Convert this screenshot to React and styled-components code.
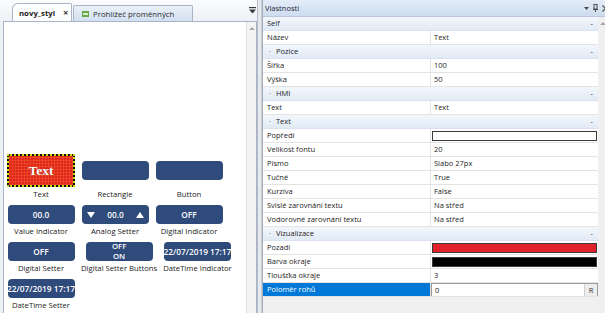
import React from "react";
import styled, { createGlobalStyle } from "styled-components";

const GlobalStyle = createGlobalStyle`
  html, body {
    margin: 0;
    padding: 0;
  }
  body {
    font-family: "Open Sans", "Noto Sans", sans-serif;
    background: #eceff3;
  }
`;

const Window = styled.div`
  width: 605px;
  height: 313px;
  display: flex;
  overflow: hidden;
  background: #eceff3;
  font-size: 7.5px;
  color: #1e1e1e;
`;

/* ---------- left pane ---------- */

const LeftPane = styled.div`
  width: 257px;
  flex-shrink: 0;
  display: flex;
  flex-direction: column;
`;

const TabStrip = styled.div`
  height: 21px;
  flex-shrink: 0;
  display: flex;
  align-items: flex-end;
  padding-left: 12px;
  background: linear-gradient(#fbfcfd, #eef1f5);
  font-size: 7.8px;
`;

const Tab = styled.div`
  box-sizing: border-box;
  width: ${(p) => p.$w}px;
  height: ${(p) => (p.$active ? 18 : 16)}px;
  display: flex;
  align-items: center;
  gap: 4px;
  padding-left: ${(p) => (p.$active ? 6 : 8)}px;
  margin-right: 1px;
  border: 1px solid #a9b5c7;
  border-bottom: none;
  border-radius: ${(p) => (p.$active ? "6px 2px 0 0" : "2px 2px 0 0")};
  background: ${(p) => (p.$active ? "#fff" : "linear-gradient(#e9f0f9, #d2e0f1)")};
  font-weight: ${(p) => (p.$active ? 700 : 400)};
  color: ${(p) => (p.$active ? "#1a1a1a" : "#2b2b2b")};
  white-space: nowrap;
`;

const Close = styled.span`
  margin-left: 4px;
  font-size: 9.5px;
  font-weight: 700;
  color: #333;
`;

const StripMenu = styled.div`
  margin-left: auto;
  margin-right: 1px;
  align-self: center;
  display: flex;
`;

const Frame = styled.div`
  flex: 1;
  display: flex;
  margin-left: 3px;
  border: 1px solid #a9b5c7;
  border-bottom: none;
  background: #fff;
  min-height: 0;
`;

const Canvas = styled.div`
  flex: 1;
  display: flex;
  flex-wrap: wrap;
  align-content: flex-start;
  gap: 5px 6px;
  padding: 132px 0 0 3px;
  font-size: 7.7px;
`;

const VScroll = styled.div`
  width: 10px;
  flex-shrink: 0;
  background: #f4f4f4;
  border-left: 1px solid #dcdcdc;
  display: flex;
  justify-content: center;
  padding-top: 4px;
  box-sizing: border-box;
`;

const Item = styled.div`
  min-width: 68px;
  display: flex;
  flex-direction: column;
  align-items: center;
`;

const Slot = styled.div`
  flex: 1;
  display: flex;
  align-items: center;
`;

const Caption = styled.div`
  margin-top: 1px;
  line-height: 12px;
  white-space: nowrap;
  color: #222;
`;

const Widget = styled.div`
  box-sizing: border-box;
  width: 67px;
  height: 19px;
  border-radius: 4px;
  background: #2f4b7b;
  color: #fff;
  font-size: ${(p) => (p.$stack ? "7.8px" : "8.3px")};
  font-weight: 600;
  display: flex;
  flex-direction: column;
  align-items: center;
  justify-content: center;
  line-height: ${(p) => (p.$stack ? "9.5px" : "12px")};
  white-space: nowrap;
  overflow: hidden;
`;

const Spinner = styled(Widget)`
  flex-direction: row;
  justify-content: space-between;
  padding: 0 4px 0 5px;
`;

const SelectedText = styled.div`
  box-sizing: border-box;
  width: 68px;
  height: 33px;
  border: 2px dotted #d9d21a;
  background:
    repeating-linear-gradient(90deg, rgba(250, 120, 40, 0.3) 0 1px, transparent 1px 3px) padding-box,
    repeating-linear-gradient(0deg, rgba(250, 120, 40, 0.3) 0 1px, transparent 1px 3px) padding-box,
    linear-gradient(#e1261f, #e1261f) padding-box,
    #111 border-box;
  display: flex;
  align-items: center;
  justify-content: center;
  color: #fff;
  font-family: "Liberation Serif", "DejaVu Serif", serif;
  font-weight: 700;
  font-size: 13.5px;
  text-shadow: 0 0 1px rgba(90, 0, 0, 0.6);
`;

/* ---------- splitter ---------- */

const Splitter = styled.div`
  width: 5px;
  flex-shrink: 0;
  box-sizing: border-box;
  background: #e6e9ed;
  border-left: 1px solid #b4bcc7;
  border-right: 1px solid #c8ced6;
`;

/* ---------- right pane ---------- */

const RightPane = styled.div`
  width: 348px;
  flex-shrink: 0;
  display: flex;
  flex-direction: column;
  border-left: 1px solid #a4adb9;
`;

const PaneHeader = styled.div`
  height: 17px;
  flex-shrink: 0;
  box-sizing: border-box;
  display: flex;
  align-items: center;
  padding-left: 2px;
  background: linear-gradient(#e4edf8, #cddcef);
  border-bottom: 1px solid #b9c8dc;
  color: #1c2430;
`;

const HeaderTools = styled.div`
  margin-left: auto;
  margin-right: 2px;
  display: flex;
  align-items: center;
  gap: 4px;
`;

const Body = styled.div`
  flex: 1;
  display: flex;
  background: #f0f0f0;
  min-height: 0;
`;

const Grid = styled.div`
  flex: 1;
  display: flex;
  flex-direction: column;
`;

const Row = styled.div`
  height: 14px;
  flex-shrink: 0;
  box-sizing: border-box;
  display: flex;
  border-bottom: 1px solid #e3e3e3;
  background: #fff;
  line-height: 13px;
`;

const Category = styled(Row)`
  background: linear-gradient(#f3f7fc, #e1eaf6);
  border-bottom: 1px solid #d9e2ee;
  padding: 0 5px 0 ${(p) => (p.$root ? 4 : 6)}px;
  justify-content: space-between;
`;

const Dot = styled.span`
  margin-right: 5px;
  color: #555;
`;

const NameCell = styled.div`
  width: 168px;
  flex-shrink: 0;
  box-sizing: border-box;
  padding-left: 4px;
  border-right: 1px solid #e3e3e3;
  white-space: nowrap;
  background: ${(p) => (p.$selected ? "#0078d7" : "transparent")};
  color: ${(p) => (p.$selected ? "#fff" : "inherit")};
`;

const ValueCell = styled.div`
  flex: 1;
  display: flex;
  align-items: center;
  padding-left: 3px;
  white-space: nowrap;
`;

const Swatch = styled.div`
  flex: 1;
  height: 10px;
  margin: 0 1px 0 -2px;
  box-sizing: border-box;
  border: 1px solid #3a3a3a;
  background: ${(p) => p.$color};
`;

const EditBox = styled.div`
  flex: 1;
  align-self: stretch;
  display: flex;
  margin-left: -3px;
  border: 1px solid #9a9a9a;
  border-bottom: none;
  box-sizing: border-box;
`;

const EditText = styled.div`
  flex: 1;
  padding-left: 3px;
  line-height: 12px;
`;

const EditButton = styled.div`
  width: 12px;
  background: #ededed;
  border-left: 1px solid #cfcfcf;
  text-align: center;
  line-height: 12px;
  color: #333;
`;

const GridScroll = styled.div`
  width: 13px;
  flex-shrink: 0;
  background: #f0f0f0;
  display: flex;
  justify-content: flex-start;
  padding: 4px 0 0 2px;
  box-sizing: border-box;
`;

/* ---------- icons ---------- */

const UpArrow = () => (
  <svg width="6" height="4" viewBox="0 0 6 4">
    <polygon points="0,4 3,1 6,4" fill="#a8a8a8" />
  </svg>
);

const MenuGlyph = () => (
  <svg width="7" height="7" viewBox="0 0 7 7">
    <rect x="0" y="0" width="7" height="1.2" fill="#3a3a3a" />
    <polygon points="0,2.5 7,2.5 3.5,6.5" fill="#3a3a3a" />
  </svg>
);

const VarIcon = () => (
  <svg width="7" height="6" viewBox="0 0 7 6">
    <rect x="0" y="0" width="7" height="6" fill="#66a84a" />
    <rect x="1" y="2" width="5" height="2" fill="#d8f0c8" />
  </svg>
);

const Tri = ({ up }) => (
  <svg width="8" height="6" viewBox="0 0 8 6">
    <polygon points={up ? "0,6 4,0 8,6" : "0,0 8,0 4,6"} fill="#fff" />
  </svg>
);

const DropIcon = () => (
  <svg width="5" height="3" viewBox="0 0 5 3">
    <polygon points="0,0 5,0 2.5,3" fill="#4a4a4a" />
  </svg>
);

const PinIcon = () => (
  <svg width="5" height="8" viewBox="0 0 5 8">
    <rect x="1" y="0.5" width="3" height="4.5" fill="none" stroke="#4a4a4a" strokeWidth="1" />
    <rect x="0" y="5" width="5" height="1" fill="#4a4a4a" />
    <rect x="2" y="6" width="1" height="2" fill="#4a4a4a" />
  </svg>
);

const CloseIcon = () => (
  <svg width="7" height="7" viewBox="0 0 7 7">
    <path d="M0.5 0.5 L6.5 6.5 M6.5 0.5 L0.5 6.5" stroke="#4a4a4a" strokeWidth="1.2" />
  </svg>
);

/* ---------- data ---------- */

const rows = [
  { cat: "Self", root: true },
  { name: "Název", value: "Text" },
  { cat: "Pozice" },
  { name: "Šířka", value: "100" },
  { name: "Výška", value: "50" },
  { cat: "HMI" },
  { name: "Text", value: "Text" },
  { cat: "Text" },
  { name: "Popředí", color: "#ffffff" },
  { name: "Velikost fontu", value: "20" },
  { name: "Písmo", value: "Slabo 27px" },
  { name: "Tučné", value: "True" },
  { name: "Kurzíva", value: "False" },
  { name: "Svislé zarovnání textu", value: "Na střed" },
  { name: "Vodorovné zarovnání textu", value: "Na střed" },
  { cat: "Vizualizace" },
  { name: "Pozadí", color: "#e2222a" },
  { name: "Barva okraje", color: "#000000" },
  { name: "Tloušťka okraje", value: "3" },
  { name: "Poloměr rohů", value: "0", selected: true },
];

const PropertyRow = ({ row }) => {
  if (row.cat) {
    return (
      <Category $root={row.root}>
        <span>
          {!row.root && <Dot>·</Dot>}
          {row.cat}
        </span>
        <span>-</span>
      </Category>
    );
  }
  return (
    <Row>
      <NameCell $selected={row.selected}>{row.name}</NameCell>
      <ValueCell>
        {row.color ? (
          <Swatch $color={row.color} />
        ) : row.selected ? (
          <EditBox>
            <EditText>{row.value}</EditText>
            <EditButton>R</EditButton>
          </EditBox>
        ) : (
          row.value
        )}
      </ValueCell>
    </Row>
  );
};

export default function App() {
  return (
    <>
      <GlobalStyle />
      <Window>
        <LeftPane>
          <TabStrip>
            <Tab $active $w={60}>
              novy_styl
              <Close>×</Close>
            </Tab>
            <Tab $w={120}>
              <VarIcon />
              Prohlížeč proměnných
            </Tab>
            <StripMenu>
              <MenuGlyph />
            </StripMenu>
          </TabStrip>
          <Frame>
            <Canvas>
              <Item>
                <Slot>
                  <SelectedText>Text</SelectedText>
                </Slot>
                <Caption>Text</Caption>
              </Item>
              <Item>
                <Slot>
                  <Widget />
                </Slot>
                <Caption>Rectangle</Caption>
              </Item>
              <Item>
                <Slot>
                  <Widget />
                </Slot>
                <Caption>Button</Caption>
              </Item>
              <Item>
                <Slot>
                  <Widget>00.0</Widget>
                </Slot>
                <Caption>Value Indicator</Caption>
              </Item>
              <Item>
                <Slot>
                  <Spinner>
                    <Tri />
                    <span>00.0</span>
                    <Tri up />
                  </Spinner>
                </Slot>
                <Caption>Analog Setter</Caption>
              </Item>
              <Item>
                <Slot>
                  <Widget>OFF</Widget>
                </Slot>
                <Caption>Digital Indicator</Caption>
              </Item>
              <Item>
                <Slot>
                  <Widget>OFF</Widget>
                </Slot>
                <Caption>Digital Setter</Caption>
              </Item>
              <Item>
                <Slot>
                  <Widget $stack>
                    <span>OFF</span>
                    <span>ON</span>
                  </Widget>
                </Slot>
                <Caption>Digital Setter Buttons</Caption>
              </Item>
              <Item>
                <Slot>
                  <Widget>22/07/2019 17:17</Widget>
                </Slot>
                <Caption>DateTime Indicator</Caption>
              </Item>
              <Item>
                <Slot>
                  <Widget>22/07/2019 17:17</Widget>
                </Slot>
                <Caption>DateTime Setter</Caption>
              </Item>
            </Canvas>
            <VScroll>
              <UpArrow />
            </VScroll>
          </Frame>
        </LeftPane>
        <Splitter />
        <RightPane>
          <PaneHeader>
            Vlastnosti
            <HeaderTools>
              <DropIcon />
              <PinIcon />
              <CloseIcon />
            </HeaderTools>
          </PaneHeader>
          <Body>
            <Grid>
              {rows.map((r, i) => (
                <PropertyRow key={i} row={r} />
              ))}
            </Grid>
            <GridScroll>
              <UpArrow />
            </GridScroll>
          </Body>
        </RightPane>
      </Window>
    </>
  );
}
